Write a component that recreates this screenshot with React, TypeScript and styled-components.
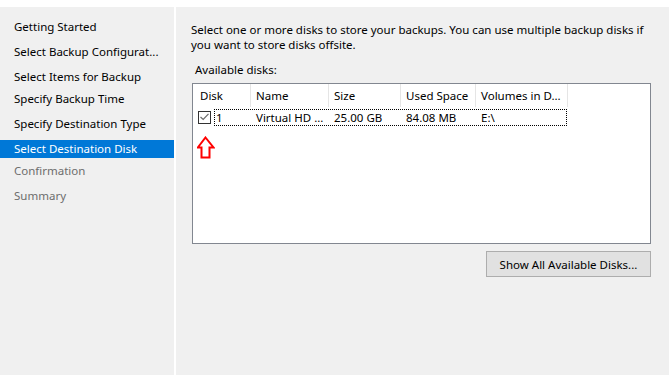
import styled, { createGlobalStyle } from "styled-components";

const GlobalStyle = createGlobalStyle`
  html, body {
    margin: 0;
    padding: 0;
    background: #ffffff;
  }
  body {
    font-family: "Segoe UI", "Noto Sans", sans-serif;
    font-size: 11.5px;
    color: #000;
  }
`;

const Window = styled.div`
  width: 669px;
  height: 375px;
  padding-top: 7px;
  box-sizing: border-box;
  background: #ffffff;
  display: flex;
  gap: 2px;
  overflow: hidden;
`;

const Nav = styled.div`
  width: 174px;
  background: #f0f0f0;
  padding-top: 11px;
  display: flex;
  flex-direction: column;
`;

const NavItem = styled.div<{ $space: number; $active?: boolean; $muted?: boolean }>`
  height: 18px;
  line-height: 18px;
  margin-top: ${(p) => p.$space}px;
  padding-left: 14px;
  white-space: nowrap;
  background: ${(p) => (p.$active ? "#0078d7" : "transparent")};
  color: ${(p) => (p.$active ? "#ffffff" : p.$muted ? "#6d6d6d" : "#000000")};
`;

const Content = styled.div`
  flex: 1;
  background: #f0f0f0;
  padding: 15px 0 0 15px;
  display: flex;
  flex-direction: column;
`;

const Intro = styled.p`
  margin: 0;
  width: 462px;
  line-height: 15px;
`;

const Label = styled.div`
  margin: 10px 0 0 4px;
  line-height: 15px;
`;

const ListBox = styled.div`
  margin: 6px 0 0 1px;
  width: 459px;
  height: 161px;
  box-sizing: border-box;
  border: 1px solid #828790;
  background: #ffffff;
`;

const HeaderRow = styled.div`
  display: grid;
  grid-template-columns: 58px 78px 72px 75px 92px;
  height: 23px;
`;

const HeaderCell = styled.div`
  line-height: 23px;
  padding-left: 5px;
  border-right: 1px solid #e5e5e5;
  white-space: nowrap;
  &:first-child {
    padding-left: 7px;
  }
`;

const DataRow = styled.div`
  display: flex;
  align-items: center;
  height: 18px;
  margin-top: 1px;
`;

const CheckCell = styled.div`
  width: 21px;
  display: flex;
  align-items: center;
  padding-left: 5px;
  box-sizing: border-box;
`;

const CheckBox = styled.div`
  width: 13px;
  height: 13px;
  box-sizing: border-box;
  border: 1px solid #333333;
  background: #ffffff;
  display: flex;
  align-items: center;
  justify-content: center;
`;

const FocusBox = styled.div`
  width: 353px;
  height: 17px;
  box-sizing: border-box;
  border: 1px dotted #000000;
  display: grid;
  grid-template-columns: 36px 78px 72px 75px 90px;
  align-items: center;
`;

const Cell = styled.div<{ $first?: boolean }>`
  padding-left: ${(p) => (p.$first ? 1 : 5)}px;
  white-space: nowrap;
  line-height: 15px;
`;

const ArrowMark = styled.svg`
  display: block;
  margin: 10px 0 0 4px;
`;

const ButtonRow = styled.div`
  width: 459px;
  margin: 7px 0 0 1px;
  display: flex;
  justify-content: flex-end;
`;

const Button = styled.button`
  width: 165px;
  height: 26px;
  box-sizing: border-box;
  border: 1px solid #adadad;
  background: #e1e1e1;
  font-family: inherit;
  font-size: 11.5px;
  color: #000;
  padding: 0;
`;

const steps = [
  { label: "Getting Started", space: 0 },
  { label: "Select Backup Configurat...", space: 7 },
  { label: "Select Items for Backup", space: 7 },
  { label: "Specify Backup Time", space: 4 },
  { label: "Specify Destination Type", space: 7 },
  { label: "Select Destination Disk", space: 7, active: true },
  { label: "Confirmation", space: 4, muted: true },
  { label: "Summary", space: 7, muted: true },
];

const columns = ["Disk", "Name", "Size", "Used Space", "Volumes in D..."];

export default function App() {
  return (
    <>
      <GlobalStyle />
      <Window>
        <Nav>
          {steps.map((s) => (
            <NavItem key={s.label} $space={s.space} $active={s.active} $muted={s.muted}>
              {s.label}
            </NavItem>
          ))}
        </Nav>
        <Content>
          <Intro>
            Select one or more disks to store your backups. You can use multiple backup disks if
            you want to store disks offsite.
          </Intro>
          <Label>Available disks:</Label>
          <ListBox>
            <HeaderRow>
              {columns.map((c) => (
                <HeaderCell key={c}>{c}</HeaderCell>
              ))}
            </HeaderRow>
            <DataRow>
              <CheckCell>
                <CheckBox>
                  <svg width="9" height="8" viewBox="0 0 9 8">
                    <path d="M0.5 4 L3.2 6.5 L8.5 0.8" fill="none" stroke="#6b6b6b" strokeWidth="1.2" />
                  </svg>
                </CheckBox>
              </CheckCell>
              <FocusBox>
                <Cell $first>1</Cell>
                <Cell>Virtual HD ...</Cell>
                <Cell>25.00 GB</Cell>
                <Cell>84.08 MB</Cell>
                <Cell>E:\</Cell>
              </FocusBox>
            </DataRow>
            <ArrowMark width="18" height="23" viewBox="0 0 18 23">
              <path
                d="M8.5 1.5 L16.5 11.5 L12.5 11.5 L12.5 21.5 L4.5 21.5 L4.5 11.5 L0.8 11.5 Z"
                fill="none"
                stroke="#ff0000"
                strokeWidth="2"
                strokeLinejoin="miter"
              />
            </ArrowMark>
          </ListBox>
          <ButtonRow>
            <Button>Show All Available Disks...</Button>
          </ButtonRow>
        </Content>
      </Window>
    </>
  );
}
